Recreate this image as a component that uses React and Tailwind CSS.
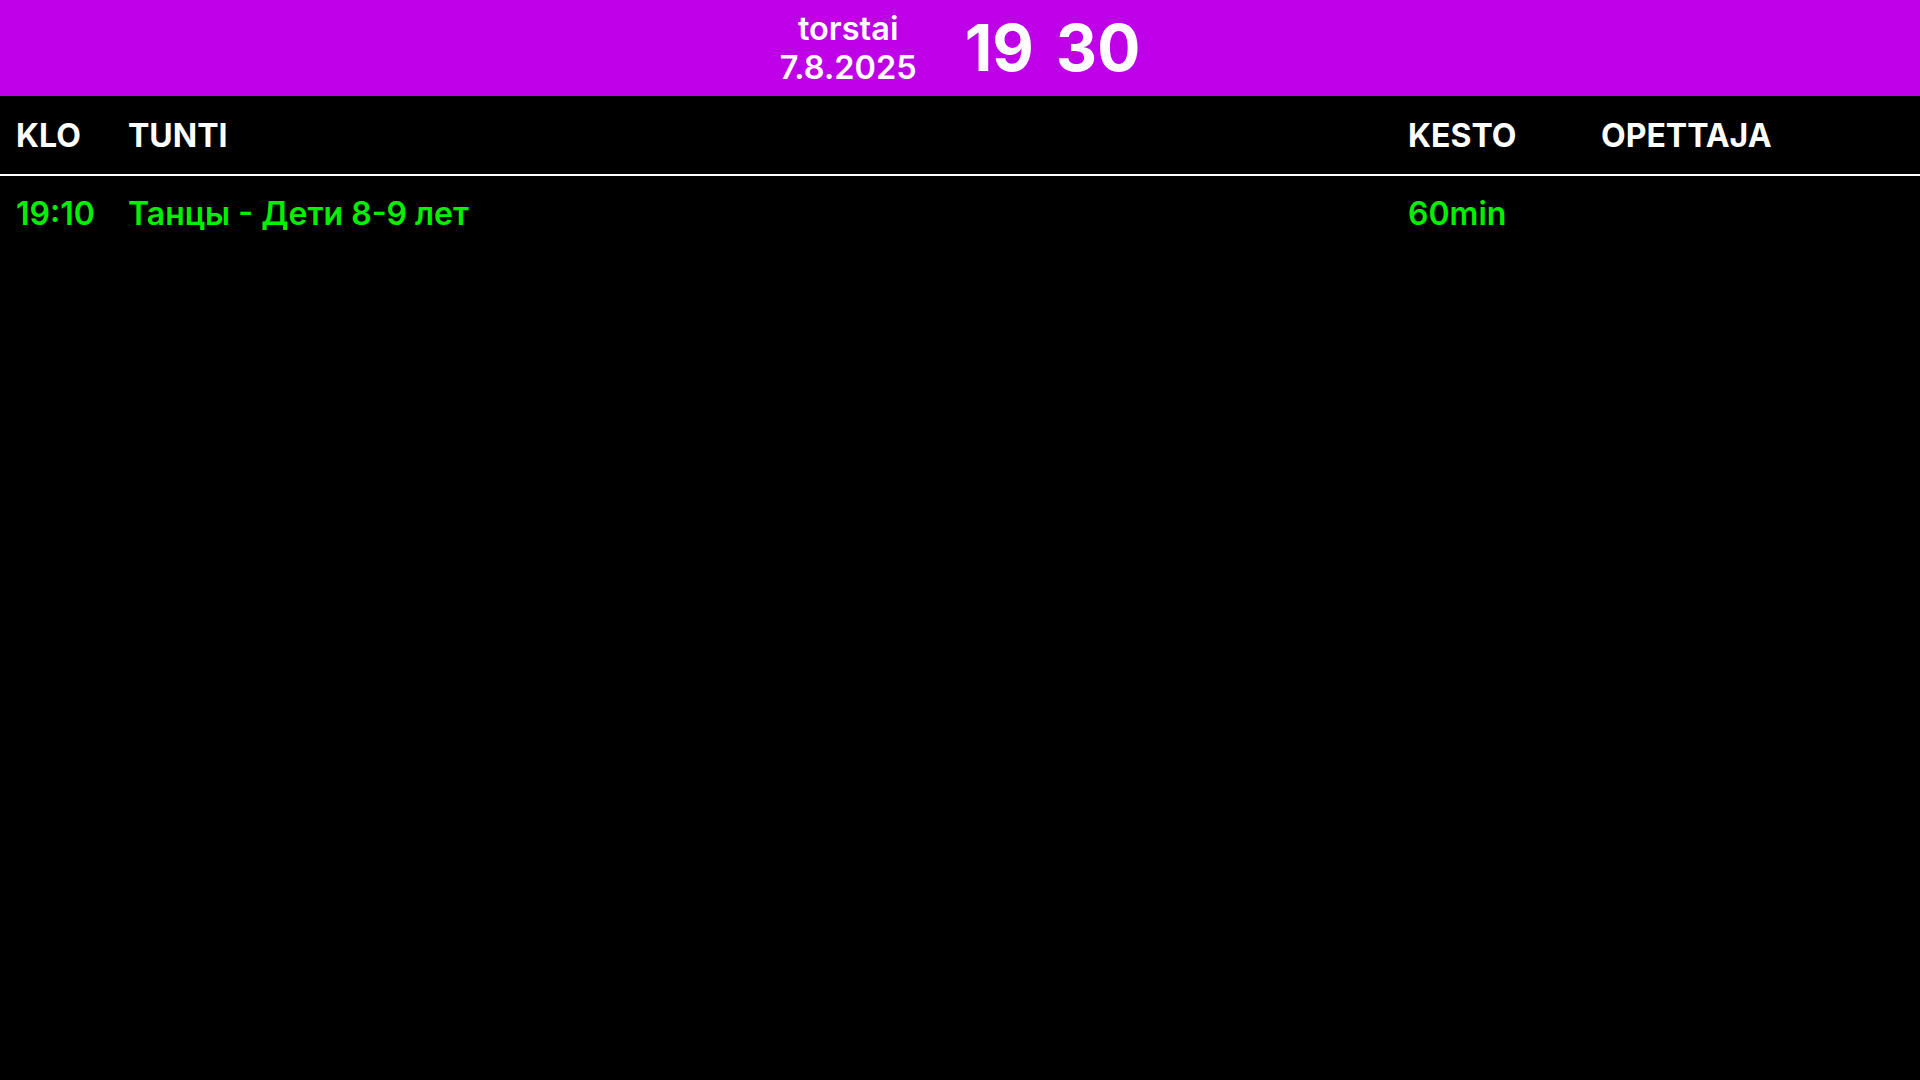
export default function App() {
  return (
    <div className="min-h-screen w-full bg-black" style={{ fontFamily: "Inter, 'Noto Sans', sans-serif" }}>
      <div className="flex h-[96px] items-center justify-center gap-[48px] bg-[#bd00e8] text-white">
        <div className="flex flex-col items-center text-[32.5px] font-semibold leading-[1.2]">
          <span>torstai</span>
          <span>7.8.2025</span>
        </div>
        <div className="flex gap-[22px] text-[64px] font-bold leading-none">
          <span>19</span>
          <span>30</span>
        </div>
      </div>
      <div className="grid grid-cols-[112px_1280px_193px_1fr] border-b-2 border-white text-[32px] font-bold text-white">
        <div className="pl-4 pt-[21px] pb-[19px] leading-[38px]">KLO</div>
        <div className="pl-4 pt-[21px] pb-[19px] leading-[38px]">TUNTI</div>
        <div className="pl-4 pt-[21px] pb-[19px] leading-[38px]">KESTO</div>
        <div className="pl-4 pt-[21px] pb-[19px] leading-[38px]">OPETTAJA</div>
      </div>
      <div className="grid grid-cols-[112px_1280px_193px_1fr] text-[32px] font-semibold text-[#00f000]">
        <div className="pl-4 pt-[19px] pb-[17px] leading-[38px]">19:10</div>
        <div className="pl-4 pt-[19px] pb-[17px] leading-[38px]">Танцы - Дети 8-9 лет</div>
        <div className="pl-4 pt-[19px] pb-[17px] leading-[38px]">60min</div>
        <div className="pl-4 pt-[19px] pb-[17px] leading-[38px]"></div>
      </div>
    </div>
  );
}
